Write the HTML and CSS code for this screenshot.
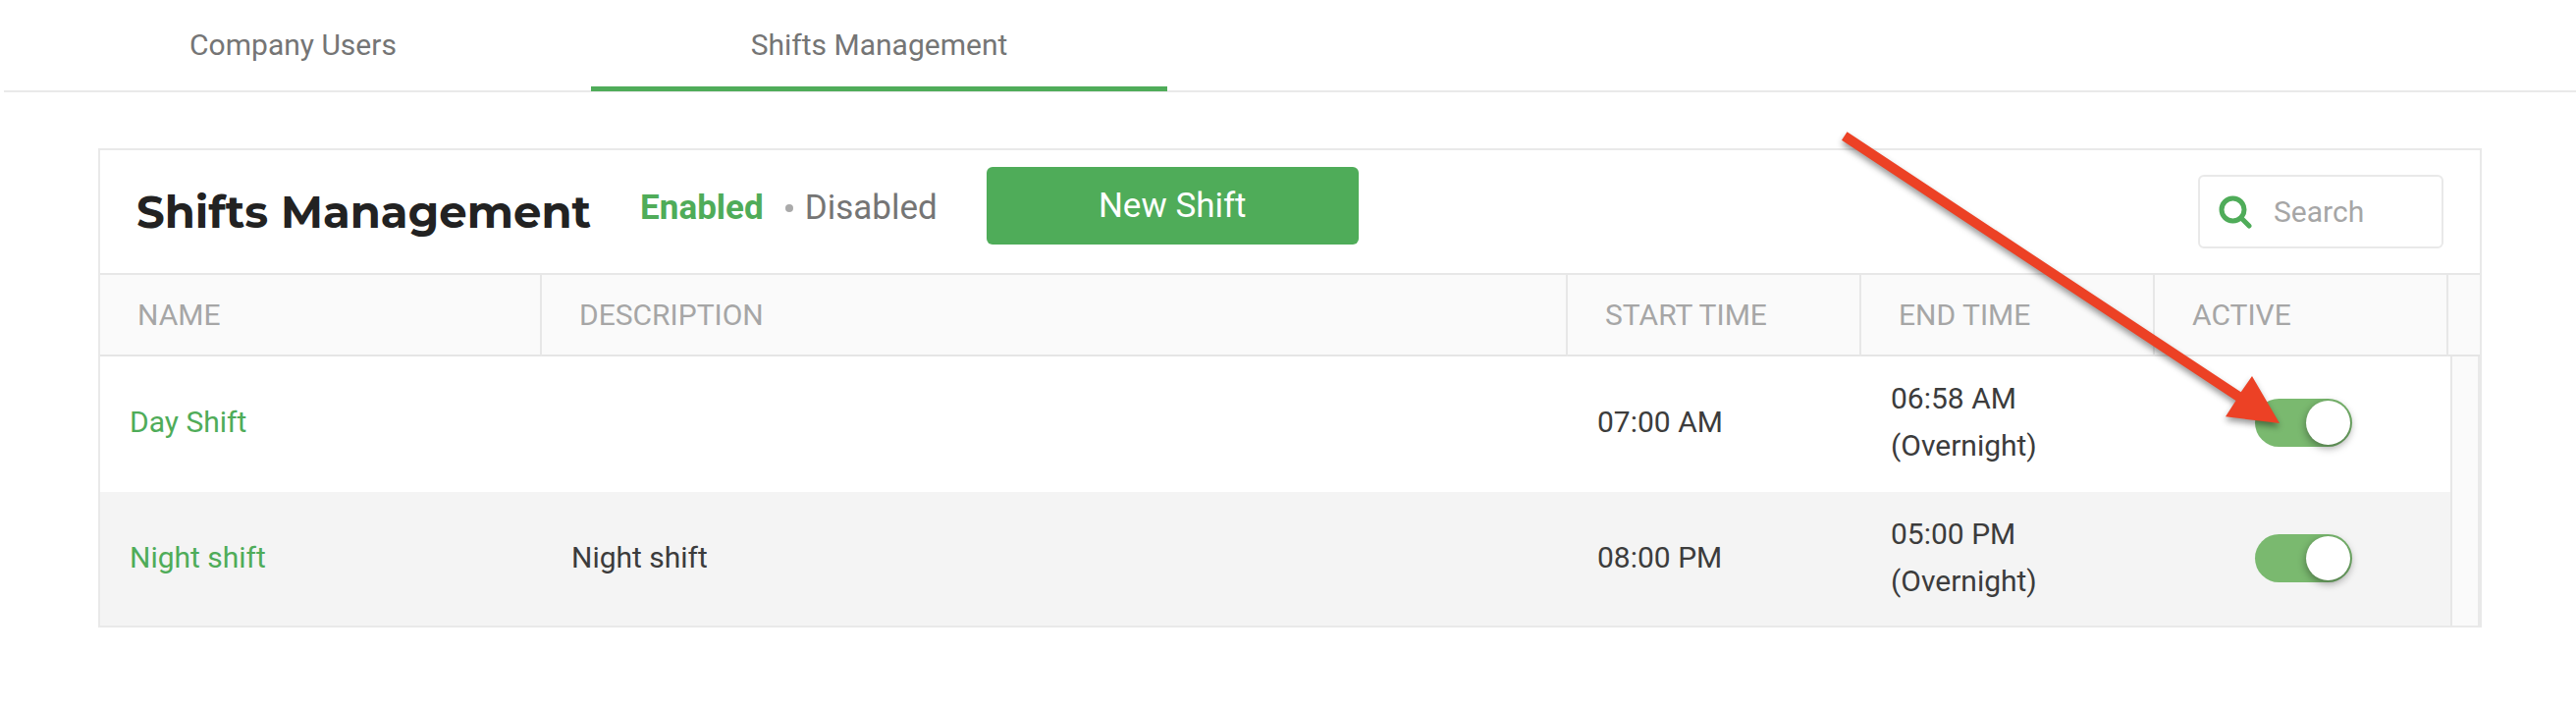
FILE: index.html
```html
<!DOCTYPE html>
<html lang="en">
<head>
    <meta charset="UTF-8">
    <meta name="viewport" content="width=device-width, initial-scale=1.0">
    <title>Shifts Management</title>
    <link rel="stylesheet" href="styles.css">
</head>
<body>
    <nav class="tabs">
        <a class="tab" href="#users">Company Users</a>
        <a class="tab active" href="#shifts">Shifts Management</a>
    </nav>

    <main class="card">
        <header class="toolbar">
            <h1>Shifts Management</h1>
            <div class="filters">
                <a class="filter selected" href="#enabled">Enabled</a>
                <span class="dot"></span>
                <a class="filter" href="#disabled">Disabled</a>
            </div>
            <button type="button" class="new-shift">New Shift</button>
            <label class="search">
                <svg class="search-icon" viewBox="0 0 34 34" aria-hidden="true">
                    <circle cx="14.5" cy="14.5" r="11.5" />
                    <path d="M23 23 L31 31" />
                </svg>
                <input type="text" placeholder="Search" aria-label="Search">
            </label>
        </header>

        <table class="shifts">
            <colgroup>
                <col class="col-name">
                <col>
                <col class="col-time">
                <col class="col-time">
                <col class="col-time">
                <col class="col-gutter">
            </colgroup>
            <thead>
                <tr>
                    <th>NAME</th>
                    <th>DESCRIPTION</th>
                    <th>START TIME</th>
                    <th>END TIME</th>
                    <th>ACTIVE</th>
                    <th class="gutter-head"></th>
                </tr>
            </thead>
            <tbody>
                <tr>
                    <td><a href="#day">Day Shift</a></td>
                    <td></td>
                    <td>07:00 AM</td>
                    <td>06:58 AM<br>(Overnight)</td>
                    <td class="active-cell"><input type="checkbox" class="toggle" aria-label="Day Shift active" checked></td>
                    <td class="gutter"></td>
                </tr>
                <tr>
                    <td><a href="#night">Night shift</a></td>
                    <td>Night shift</td>
                    <td>08:00 PM</td>
                    <td>05:00 PM<br>(Overnight)</td>
                    <td class="active-cell"><input type="checkbox" class="toggle" aria-label="Night shift active" checked></td>
                    <td class="gutter"></td>
                </tr>
            </tbody>
        </table>

        <!-- Arrow pointing at the first toggle -->
        <svg class="arrow" viewBox="0 0 480 330" aria-hidden="true">
            <path d="M21.5 14.3 L422.7 279.3 L434 263 L462 311 L407 304.3 L417.5 288 L16 22.7 Z" />
        </svg>
    </main>
</body>
</html>
```
FILE: styles.css
```css
* {
    box-sizing: border-box;
}

body {
    margin: 0;
    background: #fff;
    font-family: Roboto, Arial, sans-serif;
    font-size: 30px;
    color: #3c3c3c;
}

a {
    color: #4fac59;
    text-decoration: none;
}

/* Tabs */
.tabs {
    display: flex;
    gap: 10px;
    height: 94px;
    margin-left: 4px;
    padding-left: 1px;
    border-bottom: 2px solid #e9e9e9;
}

.tab {
    width: 587px;
    height: 93px;
    line-height: 92px;
    text-align: center;
    color: #757575;
}

.tab.active {
    border-bottom: 5px solid #4fac59;
}

/* Card */
.card {
    position: relative;
    margin: 57px 96px 0 100px;
    border: 2px solid #e9e9e9;
}

.toolbar {
    display: flex;
    align-items: center;
    height: 127px;
    padding: 0 37px;
    border-bottom: 2px solid #e7e7e7;
}

.toolbar h1 {
    margin: 0;
    font-family: Montserrat, Inter, sans-serif;
    font-size: 45px;
    font-weight: 700;
    color: #222;
}

.filters {
    display: flex;
    align-items: center;
    gap: 12px;
    margin-left: 50px;
    padding-bottom: 8px;
    font-size: 35px;
}

.filter {
    color: #757575;
}

.filter.selected {
    font-weight: 700;
    color: #4fac59;
}

.dot {
    width: 8px;
    height: 8px;
    margin-left: 10px;
    border-radius: 50%;
    background: #aaa;
}

.new-shift {
    width: 379px;
    height: 79px;
    margin: 0 0 12px 50px;
    border: none;
    border-radius: 6px;
    background: #4fac59;
    color: #fff;
    font-family: inherit;
    font-size: 35px;
    cursor: pointer;
}

.search {
    display: flex;
    align-items: center;
    gap: 22px;
    width: 250px;
    height: 75px;
    margin-left: auto;
    padding: 0 19px;
    border: 2px solid #e9e9e9;
    border-radius: 6px;
}

.search-icon {
    flex: none;
    width: 34px;
    height: 34px;
    fill: none;
    stroke: #4fac59;
    stroke-width: 5;
    stroke-linecap: round;
}

.search input {
    width: 100%;
    min-width: 0;
    padding: 0;
    border: none;
    outline: none;
    background: none;
    font-family: inherit;
    font-size: 30px;
}

.search input::placeholder {
    color: #a6a6a6;
}

/* Table */
.shifts {
    width: 100%;
    table-layout: fixed;
    border-collapse: separate;
    border-spacing: 0;
}

.col-name {
    width: 450px;
}

.col-time {
    width: 299px;
}

.col-gutter {
    width: 32px;
}

.shifts th {
    height: 83px;
    padding: 0 38px;
    border-right: 2px solid #e7e7e7;
    border-bottom: 2px solid #e5e5e5;
    background: #fafafa;
    font-weight: 400;
    text-align: left;
    color: #a6a6a6;
}

.shifts th.gutter-head {
    padding: 0;
    border-right: none;
}

.shifts td {
    padding: 19px 30px 21px;
    line-height: 48px;
    vertical-align: middle;
}

.shifts tbody tr:first-child td {
    border-bottom: 2px solid transparent;
}

.shifts tbody tr:nth-child(even) {
    background: #f4f4f4;
}

.shifts td.active-cell {
    padding-right: 26px;
}

/* Empty scrollbar track */
.shifts td.gutter {
    padding: 0;
    background: linear-gradient(to right, transparent 2px, #e7e7e7 2px 4px, #fafafa 4px 30px, #e9e9e9 30px);
}

.toggle {
    appearance: none;
    display: block;
    width: 99px;
    height: 49px;
    margin: 0 auto;
    padding: 2px;
    border-radius: 25px;
    background: #7ab96f;
    cursor: pointer;
}

.toggle::before {
    content: '';
    display: block;
    width: 45px;
    height: 45px;
    border-radius: 50%;
    background: #fff;
    box-shadow: 0 3px 8px rgba(0, 0, 0, 0.4);
}

.toggle:checked::before {
    margin-left: auto;
}

.arrow {
    position: absolute;
    top: -33px;
    right: 186px;
    width: 480px;
    height: 330px;
    fill: #ec4125;
    filter: drop-shadow(0 4px 3px rgba(0, 0, 0, 0.4));
    pointer-events: none;
}
```
